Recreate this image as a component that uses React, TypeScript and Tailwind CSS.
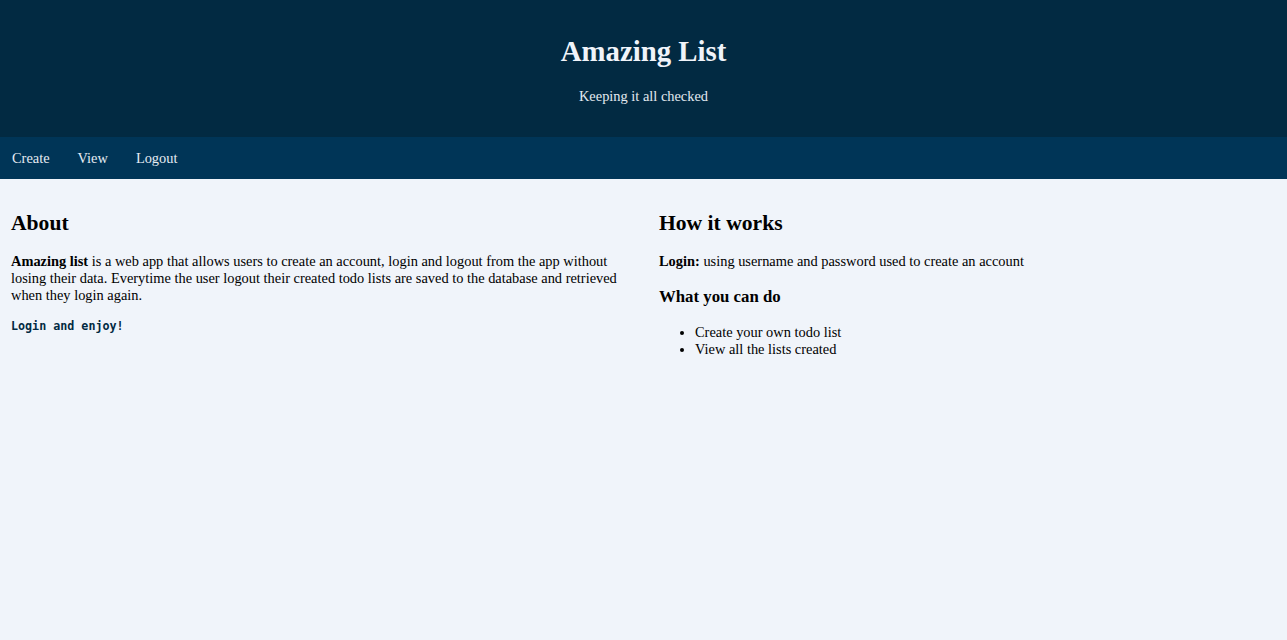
export default function App() {
  return (
    <div className="min-h-screen w-full bg-[#f0f4fa] text-[14.4px] leading-[17px] text-black font-['Liberation_Serif','Times_New_Roman',serif]">
      {/* Header */}
      <header className="flex flex-col items-center bg-[#022a42] pt-[35px] pb-[32px] text-[#f0f4fa]">
        <h1 className="text-[28.8px] leading-[33px] font-bold">Amazing List</h1>
        <p className="mt-[20px] text-[#e3e9f0]">Keeping it all checked</p>
      </header>

      {/* Nav */}
      <nav className="flex h-[42px] items-center gap-[28px] bg-[#003557] pl-[12px] text-[#e6ecf3]">
        <a>Create</a>
        <a>View</a>
        <a>Logout</a>
      </nav>

      {/* Content */}
      <main className="grid grid-cols-2 gap-[31px] px-[11px] pt-[32px]">
        <section>
          <h2 className="text-[21.6px] leading-[25px] font-bold">About</h2>
          <p className="mt-[17px]">
            <b>Amazing list</b> is a web app that allows users to create an account, login and logout from the app
            without losing their data. Everytime the user logout their created todo lists are saved to the database
            and retrieved when they login again.
          </p>
          <p className="mt-[13px]">
            <code className="font-['DejaVu_Sans_Mono',monospace] text-[11.7px] font-bold text-[#022a42]">
              Login and enjoy!
            </code>
          </p>
        </section>

        <section>
          <h2 className="text-[21.6px] leading-[25px] font-bold">How it works</h2>
          <p className="mt-[17px]">
            <b>Login:</b> using username and password used to create an account
          </p>
          <h3 className="mt-[17px] text-[16.8px] leading-[20px] font-bold">What you can do</h3>
          <ul className="mt-[17px] list-disc pl-[36px]">
            <li>Create your own todo list</li>
            <li>View all the lists created</li>
          </ul>
        </section>
      </main>
    </div>
  );
}
